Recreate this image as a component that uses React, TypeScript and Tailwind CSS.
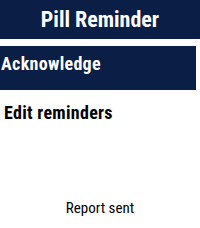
export default function App() {
  const font = { fontFamily: 'Roboto, "Liberation Sans", sans-serif' };
  return (
    <div className="w-[200px] h-[228px] bg-white flex flex-col overflow-hidden [font-stretch:condensed]" style={font}>
      <div className="h-[39px] bg-[#0b1e45] flex items-center justify-center">
        <span className="text-white font-bold text-[22px] leading-none">Pill Reminder</span>
      </div>
      <div className="mt-[7px] w-[196px] h-[44px] bg-[#0b1e45] pt-[9px] pl-[1px]">
        <span className="block text-white font-bold text-[18px] leading-none tracking-[0.3px]">Acknowledge</span>
      </div>
      <div className="w-[196px] h-[44px] pt-[14px] pl-[4px]">
        <span className="block text-black font-bold text-[18px] leading-none tracking-[0.3px]">Edit reminders</span>
      </div>
      <div className="flex-1 flex items-end justify-center pb-[12px]">
        <span className="text-black text-[15px] leading-none">Report sent</span>
      </div>
    </div>
  );
}
